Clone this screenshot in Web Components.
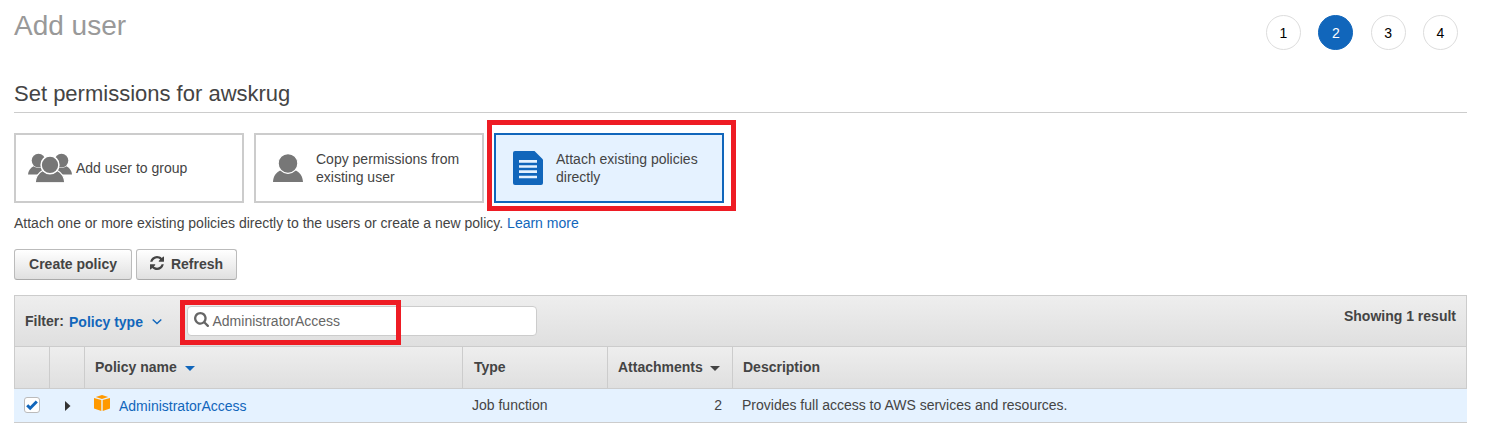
<!DOCTYPE html>
<html lang="en">
<head>
<meta charset="utf-8">
<title>Add user</title>
<style>
html,body{margin:0;background:#fff}
body{font:14px/18px "Liberation Sans",Arial,sans-serif;color:#444;width:1486px;height:438px;overflow:hidden}
</style>
</head>
<body>
<add-user-page></add-user-page>
<script>
function define(name, html) {
  const template = document.createElement('template');
  template.innerHTML = html;
  customElements.define(name, class extends HTMLElement {
    constructor() {
      super();
      this.attachShadow({ mode: 'open' }).append(template.content.cloneNode(true));
    }
  });
}

define('wizard-step', `<style>
:host{display:flex;box-sizing:border-box;width:35px;height:35px;border:1px solid #ddd;border-radius:50%;align-items:center;justify-content:center;color:#000;background:#fff}
:host([active]){background:#1166bb;border-color:#1166bb;color:#fff}
</style><slot></slot>`);

define('page-title', `<style>
:host{display:flex;justify-content:space-between;height:66px;color:#999;font-size:28px;line-height:32px}
.title{padding-top:10px}
.steps{display:flex;gap:17.33px;padding:15px 9px 0 0;font-size:14px;line-height:18px}
</style><div class="title"><slot></slot></div><div class="steps"><slot name="steps"></slot></div>`);

define('section-heading', `<style>
:host{display:block;box-sizing:border-box;height:47px;padding-top:15px;border-bottom:1px solid #ccc;font-size:22px;line-height:25px}
</style><slot></slot>`);

define('option-card', `<style>
:host{display:flex;position:relative;box-sizing:border-box;width:230px;height:70px;border:2px solid #ccc;align-items:center;padding-left:12px;background:#fff}
:host([selected]){border-color:#1166bb;background:#e5f2ff;padding-left:17px}
.icon{display:flex;width:var(--icon-box,48px);flex:none}
</style><span class="icon"><slot name="icon"></slot></span><span><slot></slot></span><slot name="mark"></slot>`);

define('highlight-box', `<style>
:host{position:absolute;box-sizing:border-box;border:5px solid #ee1c24;pointer-events:none;z-index:2}
</style>`);

define('push-button', `<style>
:host{display:flex;box-sizing:border-box;height:31px;padding:0 0 1px;border:1px solid #bbb;border-bottom-color:#aaa;border-radius:3px;background:linear-gradient(#fff,#e0e0e0);font-weight:bold;align-items:center;justify-content:center}
</style><slot></slot>`);

define('search-field', `<style>
:host{display:flex;position:relative;box-sizing:border-box;width:350px;height:30px;border:1px solid #ccc;border-radius:4px;background:#fff;color:#666;font-weight:normal;align-items:center;padding-left:5.500px;gap:4px}
svg{display:block;margin-top:-3px}
</style><svg width="15" height="15" viewBox="64 128 1664 1664"><path fill="#666" d="M1216 832q0-185-131.500-316.500t-316.500-131.500-316.500 131.500-131.500 316.500 131.500 316.500 316.500 131.500 316.500-131.500 131.500-316.500zm512 832q0 52-38 90t-90 38q-54 0-90-38l-343-342q-179 124-399 124-143 0-273.500-55.500t-225-150-150-225-55.500-273.500 55.500-273.500 150-225 225-150 273.500-55.500 273.500 55.500 225 150 150 225 55.500 273.500q0 220-124 399l343 343q37 37 37 90z"/></svg><span><slot></slot></span><slot name="mark"></slot>`);

define('filter-bar', `<style>
:host{display:flex;box-sizing:border-box;height:51px;border:1px solid #ccc;border-bottom:0;background:linear-gradient(#eee,#dfdfdf);font-weight:bold;padding:10px 10px 0}
.label{padding-top:6px;width:44px}
.type{display:flex;color:#1166bb;padding-top:7px;width:118px;gap:9px}
.type svg{margin-top:5px}
.count{margin-left:auto;padding-top:1px}
</style><span class="label">Filter:</span><span class="type">Policy type<svg width="10" height="8" viewBox="0 0 10 8"><path d="M.7 1.4L5 5.6l4.3-4.2" fill="none" stroke="#1166bb" stroke-width="1.4"/></svg></span><slot></slot><span class="count"><slot name="count"></slot></span>`);

define('policy-table', `<style>
:host{display:block}
.row{display:grid;grid-template-columns:35px 35px 378px 145px 125px 1fr;box-sizing:border-box}
.head{height:43px;border:1px solid #ccc;background:linear-gradient(#eee,#dfdfdf);font-weight:bold}
.head>span{display:flex;box-sizing:border-box;padding:11px 0 0 10px;border-right:1px solid #ccc;gap:8px}
.head>span:nth-child(4){padding-left:11px}
.head>span:nth-child(5){gap:7px}
.head>span:last-child{border:0}
.head svg{margin-top:8px}
.body{height:34px;background:#e5f2ff;border-bottom:1px solid #ccc;padding-left:1px}
.body>span{display:flex;padding:7px 0 0 9px}
.body>.check{padding:8px 0 0 9px}
.body>.expand{padding:12px 0 0 15px}
.body>.name{padding:6px 0 0 9px;color:#1166bb;gap:9px}
.name b{font-weight:normal;padding-top:2px}
.body>.num{justify-content:flex-end;padding-right:11px}
.box{display:block;box-sizing:border-box;width:16px;height:16px;border:1px solid #bbb;border-radius:3px;background:#fff}
.box svg{display:block}
</style>
<div class="row head"><span></span><span></span><span>Policy name<svg width="10" height="5"><path d="M0 0h10L5 5z" fill="#1166bb"/></svg></span><span>Type</span><span>Attachments<svg width="10" height="5"><path d="M0 0h10L5 5z" fill="#444"/></svg></span><span>Description</span></div>
<div class="row body"><span class="check"><i class="box"><svg width="14" height="14" viewBox="0 0 14 14"><path d="M2.2 7.200l3 3L11.800 3.500" fill="none" stroke="#1166bb" stroke-width="3"/></svg></i></span>
<span class="expand"><svg width="6" height="10"><path d="M0 0l5.500 5L0 10z" fill="#333"/></svg></span>
<span class="name"><svg width="16" height="16" viewBox="0 0 16 16"><path d="M1.800 2L8 0l6.200 2L8 4zM0 3l7.300 2v11L0 13.500zM16 3L8.700 5v11l7.300-2.500z" fill="#f90"/></svg><b><slot name="name"></slot></b></span>
<span><slot name="type"></slot></span><span class="num"><slot name="attachments"></slot></span><span><slot name="description"></slot></span></div>`);

define('add-user-page', `<style>
:host{display:block;box-sizing:border-box;width:1467px;padding-left:14px}
.cards{display:flex;gap:10px;margin-top:20px}
.copy{--icon-box:43px;padding-left:17px}
.doc{--icon-box:43px}
.cards option-card svg{display:block}
.intro{margin:11px 0 0}
a{color:#1166bb;text-decoration:none}
.actions{display:flex;gap:4px;margin:17px 0 15px}
.create{width:118px}.refresh{width:101px}
.refresh svg{margin-right:7px;margin-top:-2px}
.card-mark{left:-9px;top:-15px;width:249px;height:91px}
.field-mark{left:-8px;top:-7px;width:221px;height:45px}
</style>
<page-title>Add user<wizard-step slot="steps">1</wizard-step><wizard-step slot="steps" active>2</wizard-step><wizard-step slot="steps">3</wizard-step><wizard-step slot="steps">4</wizard-step></page-title>
<section-heading>Set permissions for awskrug</section-heading>
<div class="cards">
<option-card><svg slot="icon" width="45" height="30" viewBox="0 0 45 30"><g fill="#777"><circle cx="10.500" cy="7.600" r="6.800"/><circle cx="33.500" cy="7.600" r="6.800"/><path d="M0 21.500q.5-5.500 5.500-8.200 5 3.500 10 0v8.200zM44 21.500q-.5-5.500-5.500-8.200-5 3.500-10 0v8.200z"/></g><path d="M7.100 30c.4-6.500 3-10 7.600-12.500q7.300 5.500 14.600 0c4.600 2.500 7.200 6 7.600 12.500z" fill="#777" stroke="#fff" stroke-width="1.300"/><path d="M7 29.500h30v1H7z" fill="#fff"/><circle cx="22" cy="11.900" r="8.900" fill="#777" stroke="#fff" stroke-width="1.500"/></svg>Add user to group</option-card>
<option-card class="copy"><svg slot="icon" width="30" height="28" viewBox="0 0 30 28"><path d="M0 28c.3-6 3-9.500 7.500-11.800q7.500 6 15 0C27 18.500 29.700 22 30 28z" fill="#777"/><circle cx="15" cy="9.400" r="9.900" fill="#777" stroke="#fff" stroke-width="1.300"/></svg>Copy permissions from<br>existing user</option-card>
<option-card class="doc" selected><svg slot="icon" width="30" height="34" viewBox="0 0 30 34"><path d="M2 0h19.500L30 8.500V32q0 2-2 2H2q-2 0-2-2V2Q0 0 2 0z" fill="#1166bb"/><path d="M6 10.300h18M6 15.500h18M6 20.700h18M6 26h18" stroke="#e5f2ff" stroke-width="2.700"/></svg>Attach existing policies<br>directly<highlight-box slot="mark" class="card-mark"></highlight-box></option-card>
</div>
<p class="intro">Attach one or more existing policies directly to the users or create a new policy. <a>Learn more</a></p>
<div class="actions"><push-button class="create">Create policy</push-button><push-button class="refresh"><svg width="14" height="14" viewBox="0 0 1536 1536"><path fill="#444" d="M1511 928q0 5-1 7-64 268-268 434.500t-478 166.500q-146 0-282.500-55t-243.500-157l-129 129q-19 19-45 19t-45-19-19-45v-448q0-26 19-45t45-19h448q26 0 45 19t19 45-19 45l-137 137q71 66 161 102t187 36q134 0 250-65t186-179q11-17 53-117 8-23 30-23h192q13 0 22.500 9.500t9.500 22.500zm25-800v448q0 26-19 45t-45 19h-448q-26 0-45-19t-19-45 19-45l138-138q-148-137-349-137-134 0-250 65t-186 179q-11 17-53 117-8 23-30 23h-199q-13 0-22.500-9.500t-9.500-22.500v-7q65-268 270-434.500t480-166.500q146 0 284 55.500t245 156.500l130-129q19-19 45-19t45 19 19 45z"/></svg>Refresh</push-button></div>
<filter-bar><search-field>AdministratorAccess<highlight-box slot="mark" class="field-mark"></highlight-box></search-field><span slot="count">Showing 1 result</span></filter-bar>
<policy-table><span slot="name">AdministratorAccess</span><span slot="type">Job function</span><span slot="attachments">2</span><span slot="description">Provides full access to AWS services and resources.</span></policy-table>`);
</script>
</body>
</html>
